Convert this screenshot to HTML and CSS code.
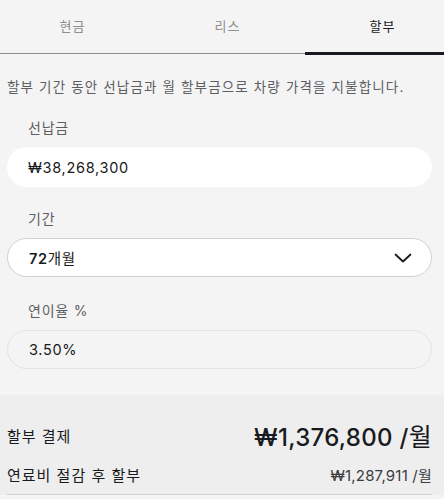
FILE: index.html
```html
<!DOCTYPE html>
<html lang="ko">
<head>
<meta charset="utf-8">
<link rel="stylesheet" href="styles.css">
</head>
<body>
<div class="tabs">
  <div class="tab">현금</div>
  <div class="tab">리스</div>
  <div class="tab active">할부</div>
</div>
<div class="content">
  <p class="desc">할부 기간 동안 선납금과 월 할부금으로 차량 가격을 지불합니다.</p>
  <div class="field">
    <div class="label">선납금</div>
    <div class="input plain">₩38,268,300</div>
  </div>
  <div class="field">
    <div class="label">기간</div>
    <div class="input select"><span><b>72</b><span class="ko">개월</span></span>
      <svg class="chev" width="18" height="10" viewBox="0 0 18 10"><path d="M1.5 1.5 L9 8.5 L16.5 1.5" fill="none" stroke="#171a20" stroke-width="1.8" stroke-linecap="round" stroke-linejoin="round"/></svg>
    </div>
  </div>
  <div class="field">
    <div class="label">연이율 %</div>
    <div class="input disabled">3.50%</div>
  </div>
</div>
<div class="summary">
  <div class="inner">
    <div class="row main">
      <span class="k">할부 결제</span>
      <span class="v">₩1,376,800 /<span class="ko">월</span></span>
    </div>
    <div class="row sub">
      <span class="k">연료비 절감 후 할부</span>
      <span class="v">₩1,287,911 /<span class="ko">월</span></span>
    </div>
  </div>
</div>
</body>
</html>
```
FILE: styles.css
```css
html, body {
  margin: 0;
  padding: 0;
  overflow: hidden;
  background: #f4f4f4;
}
body {
  font-family: "Inter", "Noto Sans CJK KR", sans-serif;
  color: #171a20;
  width: 444px;
}
.ko {
  font-weight: 400;
}
.tabs {
  display: flex;
  height: 53px;
  margin-left: -5px;
  width: 449px;
  border-bottom: 1px solid #8e8e8e;
}
.tab {
  position: relative;
  flex: 0 0 155px;
  display: flex;
  align-items: center;
  justify-content: center;
  font-size: 13px;
  letter-spacing: 1px;
  color: #8e8e8e;
  padding-bottom: 2px;
  box-sizing: border-box;
}
.tab.active {
  color: #171a20;
}
.tab.active::after {
  content: "";
  position: absolute;
  left: 0;
  right: 0;
  bottom: -2px;
  height: 3px;
  background: #171a20;
}
.content {
  padding: 0 12px 0 7px;
}
.desc {
  margin: 0;
  padding-top: 23px;
  font-size: 13.5px;
  line-height: 20px;
  color: #5c5e62;
  letter-spacing: 1.15px;
  white-space: nowrap;
}
.field {
  margin-top: 21px;
}
.field + .field {
  margin-top: 22px;
}
.field:last-child {
  margin-top: 24px;
}
.label {
  padding-left: 21px;
  font-size: 14px;
  line-height: 20px;
  color: #5c5e62;
  letter-spacing: 0.8px;
  margin-bottom: 9px;
}
.input {
  height: 40px;
  box-sizing: border-box;
  border-radius: 20px;
  display: flex;
  align-items: center;
  justify-content: space-between;
  padding: 0 21px;
  font-size: 14.5px;
  letter-spacing: 0.7px;
  color: #171a20;
}
.plain {
  background: #ffffff;
}
.select {
  background: #ffffff;
  border: 1px solid #d0d1d2;
  height: 39px;
  padding-right: 19px;
}
.select b {
  font-weight: 600;
}
.chev {
  display: block;
}
.disabled {
  background: #f4f4f4;
  border: 1px solid #e2e3e3;
  height: 39px;
}
.summary {
  margin-top: 26px;
  background: #eeeeee;
  padding: 24px 12px 0 7px;
}
.inner {
  border-bottom: 1px solid #d0d1d2;
  padding-bottom: 10px;
}
.row {
  display: flex;
  justify-content: space-between;
  align-items: center;
}
.row.main {
  height: 32px;
}
.row .k {
  font-size: 15px;
  letter-spacing: 1px;
  color: #171a20;
}
.row.main .v {
  font-size: 24px;
  font-weight: 500;
  letter-spacing: 0.3px;
}
.row.main .v .ko {
  font-size: 25px;
}
.row.sub {
  margin-top: 13px;
  height: 20px;
}
.row.sub .v {
  font-size: 15px;
  color: #393c41;
  letter-spacing: 0.2px;
}
```
